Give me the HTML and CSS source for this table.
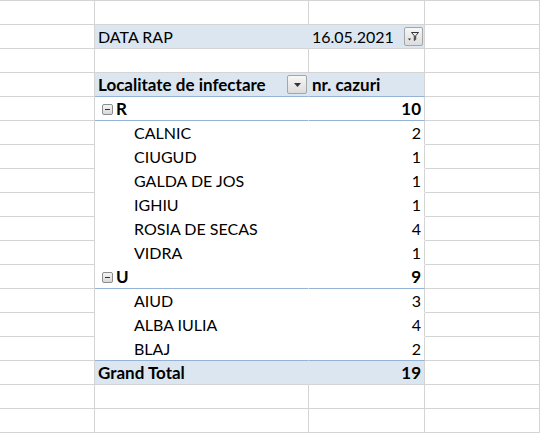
FILE: index.html
```html
<!DOCTYPE html>
<html>
<head>
<meta charset="utf-8">
<link rel="stylesheet" href="styles.css">
</head>
<body>
<div class="sheet">
  <div class="c"></div><div class="c"></div><div class="c"></div><div class="c"></div>

  <div class="c"></div>
  <div class="c blue nor">DATA RAP</div>
  <div class="c blue num date"><span>16.05.2021</span><span class="btn filter"><svg width="13" height="13" viewBox="0 0 13 13"><path d="M4.5 2.5h7l-2.8 3.3v3.7l-1.4 1v-4.7z" fill="none" stroke="#333" stroke-width="1"/><path d="M1 8.5h3l-1.5 2z" fill="#333"/></svg></span></div>
  <div class="c"></div>

  <div class="c"></div><div class="c"></div><div class="c"></div><div class="c"></div>

  <div class="c"></div>
  <div class="c blue nor hdr bold"><span>Localitate de infectare</span><span class="btn dd"><svg width="7" height="4" viewBox="0 0 7 4"><path d="M0 0h7l-3.5 4z" fill="#333"/></svg></span></div>
  <div class="c blue hdr bold">nr. cazuri</div>
  <div class="c"></div>

  <div class="c"></div>
  <div class="c pv nor sub bold"><span class="mini"></span>R</div>
  <div class="c pv sub num bold">10</div>
  <div class="c"></div>

  <div class="c"></div><div class="c pv nor plain child">CALNIC</div><div class="c pv plain num">2</div><div class="c"></div>
  <div class="c"></div><div class="c pv nor plain child">CIUGUD</div><div class="c pv plain num">1</div><div class="c"></div>
  <div class="c"></div><div class="c pv nor plain child">GALDA DE JOS</div><div class="c pv plain num">1</div><div class="c"></div>
  <div class="c"></div><div class="c pv nor plain child">IGHIU</div><div class="c pv plain num">1</div><div class="c"></div>
  <div class="c"></div><div class="c pv nor plain child">ROSIA DE SECAS</div><div class="c pv plain num">4</div><div class="c"></div>
  <div class="c"></div><div class="c pv nor plain child">VIDRA</div><div class="c pv plain num">1</div><div class="c"></div>

  <div class="c"></div>
  <div class="c pv nor sub bold"><span class="mini"></span>U</div>
  <div class="c pv sub num bold">9</div>
  <div class="c"></div>

  <div class="c"></div><div class="c pv nor plain child">AIUD</div><div class="c pv plain num">3</div><div class="c"></div>
  <div class="c"></div><div class="c pv nor plain child">ALBA IULIA</div><div class="c pv plain num">4</div><div class="c"></div>
  <div class="c"></div><div class="c pv nor plain child">BLAJ</div><div class="c pv plain num">2</div><div class="c"></div>

  <div class="c"></div>
  <div class="c blue nor total bold">Grand Total</div>
  <div class="c blue total num bold">19</div>
  <div class="c"></div>

  <div class="c"></div><div class="c"></div><div class="c"></div><div class="c"></div>
  <div class="c"></div><div class="c"></div><div class="c"></div><div class="c"></div>
</div>
</body>
</html>
```

FILE: styles.css
```css
html, body {
  margin: 0;
  padding: 0;
  background: #fff;
}
.sheet {
  display: grid;
  grid-template-columns: 95px 214px 116px 115px;
  grid-auto-rows: 24px;
  border-top: 1px solid #d4d4d4;
  font-family: "Lato", "Open Sans", sans-serif;
  font-size: 16px;
  color: #000;
  width: 540px;
}
.c {
  box-sizing: border-box;
  border-right: 1px solid #d4d4d4;
  border-bottom: 1px solid #d4d4d4;
  padding: 0 3px 2px 3px;
  display: flex;
  align-items: flex-end;
  white-space: nowrap;
  line-height: 18px;
}
.blue { background: #dce6f1; }
.nor { border-right-color: transparent; }
.bold { font-weight: 700; font-size: 17px; }
.num { justify-content: flex-end; }
.pv { background: #fff; }
.plain { border-bottom-color: #fff; }
.nor.plain, .nor.sub { border-right-color: #fff; }
.hdr { border-bottom-color: #95b3d7; }
.sub { border-bottom-color: #95b3d7; }
.total { border-top: 1px solid #95b3d7; margin-top: -1px; height: 25px; }
.blue.nor { border-right-color: #dce6f1; }
.child { padding-left: 39px; }
.date { padding-right: 1px; }
.date span:first-child { margin-right: 10px; }
.hdr.nor { justify-content: space-between; padding-right: 1px; }
.btn {
  box-sizing: border-box;
  width: 20px;
  height: 19px;
  border: 1px solid #a6a6a6;
  border-radius: 2px;
  background: linear-gradient(#f7f7f7, #dcdcdc);
  display: flex;
  align-items: center;
  justify-content: center;
  align-self: center;
  margin-top: 2px;
}
.mini {
  box-sizing: border-box;
  width: 11px;
  height: 11px;
  border: 1px solid #8c8c8c;
  border-radius: 2px;
  background: linear-gradient(#f4f4f4, #d8d8d8);
  margin: 0 3px 3px 4px;
  position: relative;
}
.mini::after {
  content: "";
  position: absolute;
  left: 2px;
  right: 2px;
  top: 4px;
  height: 1px;
  background: #333;
}
```
